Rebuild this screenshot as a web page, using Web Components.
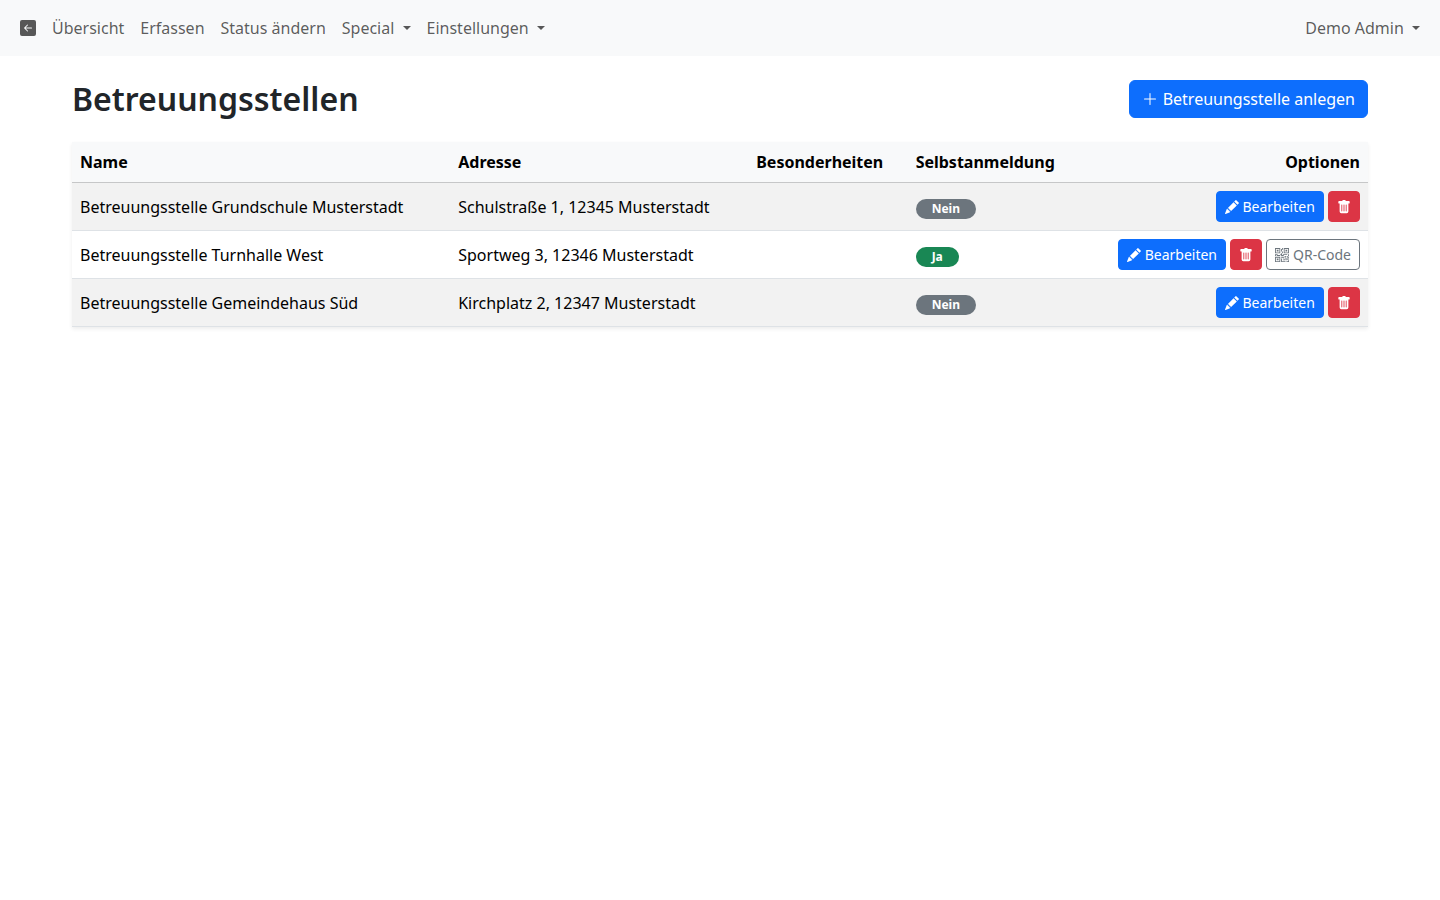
<!DOCTYPE html>
<html lang="de">
<head>
<meta charset="utf-8">
<meta name="viewport" content="width=device-width, initial-scale=1">
<title>Betreuungsstellen</title>
<style>
  body{
    margin:0; background:#fff; color:#212529;
    font-family:"Noto Sans","Liberation Sans",sans-serif;
    font-size:16px; line-height:24px;
  }
</style>
</head>
<body>
<app-navbar>
  <nav-link href="#start" label="Zurück"><ui-icon name="back"></ui-icon></nav-link>
  <nav-link href="#uebersicht">Übersicht</nav-link>
  <nav-link href="#erfassen">Erfassen</nav-link>
  <nav-link href="#status">Status ändern</nav-link>
  <nav-dropdown>Special</nav-dropdown>
  <nav-dropdown>Einstellungen</nav-dropdown>
  <nav-dropdown slot="end">Demo Admin</nav-dropdown>
</app-navbar>

<page-container>
  <page-header>
    Betreuungsstellen
    <ui-button slot="action" variant="primary" href="#anlegen"><ui-icon name="plus"></ui-icon> Betreuungsstelle anlegen</ui-button>
  </page-header>
  <site-table></site-table>
</page-container>

<script type="module">
const ICONS = {
  back: `<path d="M16 14a2 2 0 0 1-2 2H2a2 2 0 0 1-2-2V2a2 2 0 0 1 2-2h12a2 2 0 0 1 2 2zm-4.500-6.500H5.707l2.147-2.146a.5.5 0 1 0-.708-.708l-3 3a.5.5 0 0 0 0 .708l3 3a.5.5 0 0 0 .708-.708L5.707 8.500H11.500a.5.5 0 0 0 0-1"/>`,
  plus: `<path fill-rule="evenodd" d="M8 2a.5.5 0 0 1 .5.5v5h5a.5.5 0 0 1 0 1h-5v5a.5.5 0 0 1-1 0v-5h-5a.5.5 0 0 1 0-1h5v-5A.5.5 0 0 1 8 2"/>`,
  pencil: `<path d="M12.854.146a.5.5 0 0 0-.707 0L10.5 1.793 14.207 5.5l1.647-1.646a.5.5 0 0 0 0-.708zm.646 6.061L9.793 2.5 3.293 9H3.5a.5.5 0 0 1 .5.5v.5h.5a.5.5 0 0 1 .5.5v.5h.5a.5.5 0 0 1 .5.5v.5h.5a.5.5 0 0 1 .5.5v.207zm-7.468 7.468A.5.5 0 0 1 6 13.5V13h-.5a.5.5 0 0 1-.5-.5V12h-.5a.5.5 0 0 1-.5-.5V11h-.5a.5.5 0 0 1-.5-.5V10h-.5a.5.5 0 0 1-.175-.032l-.179.178a.5.5 0 0 0-.11.168l-2 5a.5.5 0 0 0 .65.65l5-2a.5.5 0 0 0 .168-.11z"/>`,
  trash: `<path d="M2.5 1a1 1 0 0 0-1 1v1a1 1 0 0 0 1 1H3v9a2 2 0 0 0 2 2h6a2 2 0 0 0 2-2V4h.5a1 1 0 0 0 1-1V2a1 1 0 0 0-1-1H10a1 1 0 0 0-1-1H7a1 1 0 0 0-1 1zm3 4a.5.5 0 0 1 .5.5v7a.5.5 0 0 1-1 0v-7a.5.5 0 0 1 .5-.5M8 5a.5.5 0 0 1 .5.5v7a.5.5 0 0 1-1 0v-7A.5.5 0 0 1 8 5m3 .5v7a.5.5 0 0 1-1 0v-7a.5.5 0 0 1 1 0"/>`,
  qr: `<path d="M2 2h2v2H2z"/><path d="M6 0v6H0V0zM5 1H1v4h4zM4 12H2v2h2z"/><path d="M6 10v6H0v-6zm-5 1v4h4v-4zm11-9h2v2h-2z"/><path d="M10 0v6h6V0zm5 1v4h-4V1zM8 1V0h1v2H8v2H7V1zm0 5V4h1v2zM6 8V7h1V6h1v2h1V7h5v1h-4v1H7V8zm0 0v1H2V8H1v1H0V7h3v1zm10 1h-1V7h1zm-1 0h-1v2h2v-1h-1zm-4 0h2v1h-1v1h-1zm2 3v-1h-1v1h-1v1H9v1h3v-2zm0 0h3v1h-2v1h-1zm-4-1v1h1v-2H7v1z"/><path d="M7 12h1v3h4v1H7zm9 2v2h-3v-1h2v-1z"/>`
};

const SITES = [
  { name: "Betreuungsstelle Grundschule Musterstadt", address: "Schulstraße 1, 12345 Musterstadt", notes: "", selfSignup: false },
  { name: "Betreuungsstelle Turnhalle West", address: "Sportweg 3, 12346 Musterstadt", notes: "", selfSignup: true },
  { name: "Betreuungsstelle Gemeindehaus Süd", address: "Kirchplatz 2, 12347 Musterstadt", notes: "", selfSignup: false }
];

// Attaches the shadow root and fills it from render()
class BaseElement extends HTMLElement{
  connectedCallback(){
    if(this.shadowRoot) return;
    this.attachShadow({mode:"open"}).innerHTML = this.render();
  }
}

class UiIcon extends BaseElement{
  render(){
    return `
      <style>
        :host { display:inline-block; width:1em; height:1em; line-height:1; vertical-align:-.125em; }
        svg{ display:block; width:100%; height:100%; }
      </style>
      <svg viewBox="0 0 16 16" fill="currentColor" aria-hidden="true">${ICONS[this.getAttribute("name")] || ""}</svg>`;
  }
}
customElements.define("ui-icon", UiIcon);

class UiButton extends BaseElement{
  render(){
    const href = this.getAttribute("href");
    const label = this.getAttribute("label");
    const aria = label ? ` aria-label="${label}"` : "";
    return `
      <style>
        :host { display:inline-block; vertical-align:middle; --bg:#0d6efd; --line:#0d6efd; --fg:#fff; }
        :host([variant="danger"]) { --bg:#dc3545; --line:#dc3545; }
        :host([variant="outline"]) { --bg:transparent; --line:#6c757d; --fg:#6c757d; }
        .btn{
          display:block; box-sizing:border-box; margin:0; padding:6px 12px;
          border:1px solid var(--line); border-radius:6px;
          background:var(--bg); color:var(--fg);
          font:inherit; line-height:24px; text-align:center;
          text-decoration:none; white-space:nowrap; cursor:pointer;
        }
        :host([size="sm"]) .btn{ padding:4px 8px; border-radius:4px; font-size:14px; line-height:21px; }
        .btn:hover{ filter:brightness(.9); }
      </style>
      ${href
        ? `<a class="btn" href="${href}"${aria}><slot></slot></a>`
        : `<button class="btn" type="button"${aria}><slot></slot></button>`}`;
  }
}
customElements.define("ui-button", UiButton);

class StatusBadge extends BaseElement{
  render(){
    return `
      <style>
        :host {
          display:inline-block; padding:4px 16px; border-radius:800px;
          background:#6c757d; color:#fff;
          font-size:12px; font-weight:700; line-height:12px;
          text-align:center; white-space:nowrap; vertical-align:baseline;
        }
        :host([on]) { background:#198754; }
      </style>
      <slot></slot>`;
  }
}
customElements.define("status-badge", StatusBadge);

const NAV_STYLE = `
  :host { display:block; }
  .link{
    display:block; margin:0; padding:8px; border:0; background:none;
    color:rgba(0,0,0,.65); font:inherit; line-height:24px;
    text-decoration:none; white-space:nowrap; cursor:pointer;
  }
  .link:hover{ color:rgba(0,0,0,.8); }
`;

class NavLink extends BaseElement{
  render(){
    const label = this.getAttribute("label");
    return `
      <style>${NAV_STYLE}</style>
      <a class="link" href="${this.getAttribute("href")}"${label ? ` aria-label="${label}"` : ""}><slot></slot></a>`;
  }
}
customElements.define("nav-link", NavLink);

class NavDropdown extends BaseElement{
  render(){
    return `
      <style>
        ${NAV_STYLE}
        .caret{
          display:inline-block; margin-left:4px; vertical-align:4px;
          border:4px solid transparent; border-top-color:currentColor; border-bottom:0;
        }
      </style>
      <button class="link" type="button" aria-haspopup="true"><slot></slot> <span class="caret"></span></button>`;
  }
}
customElements.define("nav-dropdown", NavDropdown);

class AppNavbar extends BaseElement{
  render(){
    return `
      <style>
        :host { display:block; background:#f8f9fa; }
        nav{ display:flex; flex-wrap:wrap; justify-content:space-between; padding:8px 12px; }
        .group{ display:flex; flex-wrap:wrap; }
      </style>
      <nav>
        <div class="group"><slot></slot></div>
        <div class="group"><slot name="end"></slot></div>
      </nav>`;
  }
}
customElements.define("app-navbar", AppNavbar);

class PageContainer extends BaseElement{
  render(){
    return `
      <style>
        :host { display:block; box-sizing:border-box; max-width:1320px; margin:0 auto; padding:24px 12px; }
      </style>
      <main><slot></slot></main>`;
  }
}
customElements.define("page-container", PageContainer);

class PageHeader extends BaseElement{
  render(){
    return `
      <style>
        :host { display:flex; flex-wrap:wrap; align-items:center; justify-content:space-between; gap:8px; margin-bottom:24px; }
        h1{ margin:0; font-size:32px; font-weight:600; line-height:38px; }
      </style>
      <h1><slot></slot></h1>
      <slot name="action"></slot>`;
  }
}
customElements.define("page-header", PageHeader);

class SiteTable extends BaseElement{
  render(){
    return `
      <style>
        :host { display:block; }
        table{
          width:100%; border-collapse:collapse; color:#000;
          box-shadow:0 2px 4px rgba(0,0,0,.075);
        }
        th, td{ padding:8px; text-align:left; vertical-align:middle; border-bottom:1px solid #dee2e6; }
        th{ background:#f8f9fa; font-weight:700; border-bottom-color:#c6c7c8; }
        tbody tr:nth-child(odd) td{ background:#f2f2f2; }
        .options{ text-align:right; white-space:nowrap; }
        td.options{ line-height:21px; }
      </style>
      <table>
        <thead>
          <tr>
            <th scope="col">Name</th>
            <th scope="col">Adresse</th>
            <th scope="col">Besonderheiten</th>
            <th scope="col">Selbstanmeldung</th>
            <th scope="col" class="options">Optionen</th>
          </tr>
        </thead>
        <tbody>${SITES.map(s => this.row(s)).join("")}</tbody>
      </table>`;
  }
  row(s){
    return `
      <tr>
        <td>${s.name}</td>
        <td>${s.address}</td>
        <td>${s.notes}</td>
        <td><status-badge ${s.selfSignup ? "on" : ""}>${s.selfSignup ? "Ja" : "Nein"}</status-badge></td>
        <td class="options">
          <ui-button size="sm" variant="primary" href="#bearbeiten"><ui-icon name="pencil"></ui-icon> Bearbeiten</ui-button>
          <ui-button size="sm" variant="danger" label="Löschen"><ui-icon name="trash"></ui-icon></ui-button>
          ${s.selfSignup ? `<ui-button size="sm" variant="outline"><ui-icon name="qr"></ui-icon> QR-Code</ui-button>` : ""}
        </td>
      </tr>`;
  }
}
customElements.define("site-table", SiteTable);
</script>
</body>
</html>
